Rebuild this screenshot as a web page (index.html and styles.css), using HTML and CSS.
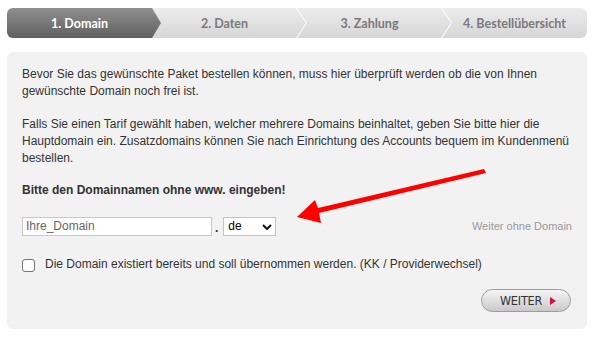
FILE: index.html
```html
<!DOCTYPE html>
<html lang="de">
<head>
<meta charset="utf-8">
<title>Domain</title>
<link rel="stylesheet" href="styles.css">
</head>
<body>
<div class="page">
  <div class="steps">
    <div class="step active"><span>1. Domain</span></div>
    <div class="step sep"><span>2. Daten</span></div>
    <div class="step sep"><span>3. Zahlung</span></div>
    <div class="step"><span>4. Bestellübersicht</span></div>
  </div>
  <div class="panel">
    <p class="p1">Bevor Sie das gewünschte Paket bestellen können, muss hier überprüft werden ob die von Ihnen gewünschte Domain noch frei ist.</p>
    <p class="p2">Falls Sie einen Tarif gewählt haben, welcher mehrere Domains beinhaltet, geben Sie bitte hier die Hauptdomain ein. Zusatzdomains können Sie nach Einrichtung des Accounts bequem im Kundenmenü bestellen.</p>
    <p class="hint">Bitte den Domainnamen ohne www. eingeben!</p>
    <div class="domain-row">
      <div class="domain-fields">
        <input class="domain-input" type="text" value="Ihre_Domain">
        <span class="dot">.</span>
        <span class="select-wrap">
          <select class="tld"><option>de</option></select>
          <svg class="chev" width="10" height="6" viewBox="0 0 10 6"><path d="M1 1 L5 5 L9 1" fill="none" stroke="#111" stroke-width="2"/></svg>
        </span>
      </div>
      <a class="skip">Weiter ohne Domain</a>
    </div>
    <label class="check-row"><span class="box"></span><span>Die Domain existiert bereits und soll übernommen werden. (KK / Providerwechsel)</span></label>
    <div class="actions">
      <button class="next">WEITER <span class="tri"></span></button>
    </div>
  </div>
  <svg class="arrow" width="594" height="340" viewBox="0 0 594 340">
    <polygon points="484,169 486,173 319,213 321,223 297,217 315,200 318,208" fill="#ff0000"/>
  </svg>
</div>
</body>
</html>
```

FILE: styles.css
```css
html, body {
  margin: 0;
  padding: 0;
  background: #fff;
}
.page {
  position: relative;
  width: 580px;
  padding: 8px 7px 0;
  font-family: "Liberation Sans", Arial, sans-serif;
  color: #333;
}
.steps {
  display: flex;
  height: 30px;
  border-radius: 6px;
  overflow: hidden;
  background: linear-gradient(#ececec, #d6d6d6);
  margin-bottom: 14px;
}
.step {
  position: relative;
  flex: 1;
  display: flex;
  align-items: center;
  justify-content: center;
  font-family: Lato, "Open Sans", sans-serif;
  font-weight: 700;
  font-size: 12.5px;
  color: #7a7a7a;
}
.step span {
  position: relative;
  z-index: 2;
}
.step.active {
  color: #fff;
  z-index: 1;
}
.step.active::before {
  content: "";
  position: absolute;
  left: 0;
  top: 0;
  bottom: 0;
  right: -9px;
  background: linear-gradient(#8f8f8f, #606060);
  clip-path: polygon(0 0, calc(100% - 9px) 0, 100% 50%, calc(100% - 9px) 100%, 0 100%);
}
.step.sep::after {
  content: "";
  position: absolute;
  top: 0;
  bottom: 0;
  right: -10px;
  width: 11px;
  background: #fdfdfd;
  z-index: 1;
  clip-path: polygon(0 0, 1.2px 0, 11px 50%, 1.2px 100%, 0 100%, 9.8px 50%);
}
.panel {
  background: #f2f2f2;
  border-radius: 6px;
  padding: 14px 15px 17px;
  font-size: 12px;
  line-height: 17px;
}
.panel p {
  margin: 0;
}
.p1 { margin-bottom: 16px !important; }
.p2 { margin-bottom: 15px !important; }
.hint { font-weight: 700; }
.domain-row {
  margin-top: 16px;
  display: flex;
  justify-content: space-between;
  align-items: center;
}
.domain-fields {
  display: flex;
  align-items: center;
}
.domain-input {
  box-sizing: border-box;
  width: 190px;
  height: 19px;
  margin: 0;
  border: 1px solid #c8c8c8;
  padding: 0 3px;
  font-family: "Liberation Sans", Arial, sans-serif;
  font-size: 12px;
  color: #666;
  background: #fff;
  outline: none;
}
.dot {
  margin: 5px 5px 0 3px;
  font-weight: 700;
  font-size: 12px;
  color: #333;
}
.select-wrap {
  position: relative;
  display: block;
}
.tld {
  display: block;
  box-sizing: border-box;
  width: 53px;
  height: 19px;
  margin: 0;
  border: 1px solid #c4c4c4;
  border-radius: 0;
  padding: 0 0 0 4px;
  -webkit-appearance: none;
  appearance: none;
  background: #fff;
  font-family: "Liberation Sans", Arial, sans-serif;
  font-size: 12px;
  color: #000;
}
.chev {
  position: absolute;
  right: 4px;
  top: 7px;
  pointer-events: none;
}
.skip {
  font-size: 11px;
  color: #999;
  margin-top: 1px;
}
.check-row {
  margin-top: 19px;
  display: flex;
  align-items: center;
}
.box {
  box-sizing: border-box;
  width: 13px;
  height: 13px;
  border: 1px solid #767676;
  border-radius: 3px;
  background: #fff;
  margin-right: 10px;
  margin-top: 1px;
}
.actions {
  margin-top: 16px;
  display: flex;
  justify-content: flex-end;
}
.next {
  box-sizing: border-box;
  width: 90px;
  height: 23px;
  margin: 0 1px 0 0;
  border: 1px solid #9c9c9c;
  border-radius: 12px;
  background: linear-gradient(#f5f5f5, #c9c9c9);
  padding: 0 0 0 4px;
  display: flex;
  align-items: center;
  justify-content: center;
  font-family: "DejaVu Sans", sans-serif;
  font-stretch: condensed;
  font-size: 12.5px;
  color: #333;
  letter-spacing: -0.2px;
}
.tri {
  display: inline-block;
  width: 0;
  height: 0;
  margin-left: 8px;
  border-top: 4.5px solid transparent;
  border-bottom: 4.5px solid transparent;
  border-left: 6px solid #d3103b;
}
.arrow {
  position: absolute;
  left: 0;
  top: 0;
  pointer-events: none;
}
```
